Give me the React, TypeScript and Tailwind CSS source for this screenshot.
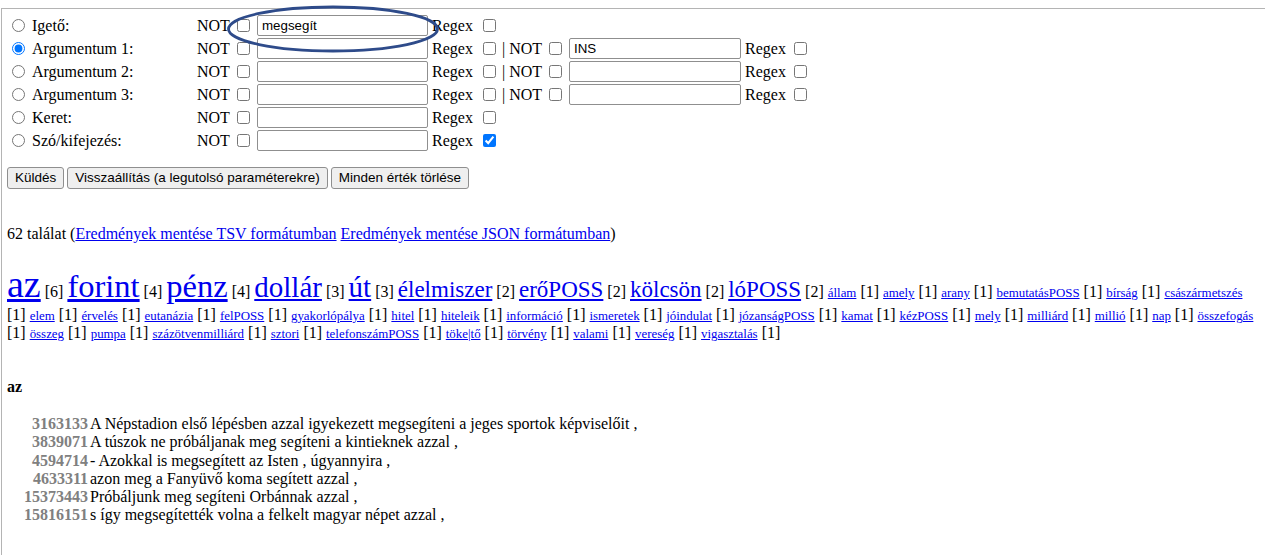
import React from "react";

const serif = { fontFamily: '"Liberation Serif", "Times New Roman", serif' };

type RowDef = { label: string; checked?: boolean; value?: string; second?: boolean; secondValue?: string; regexChecked?: boolean };

const rows: RowDef[] = [
  { label: "Igető:", value: "megsegít" },
  { label: "Argumentum 1:", checked: true, second: true, secondValue: "INS" },
  { label: "Argumentum 2:", second: true },
  { label: "Argumentum 3:", second: true },
  { label: "Keret:" },
  { label: "Szó/kifejezés:", regexChecked: true },
];

const cloud: [string, number][] = [
  ["az", 6], ["forint", 4], ["pénz", 4], ["dollár", 3], ["út", 3],
  ["élelmiszer", 2], ["erőPOSS", 2], ["kölcsön", 2], ["lóPOSS", 2],
  ["állam", 1], ["amely", 1], ["arany", 1], ["bemutatásPOSS", 1], ["bírság", 1], ["császármetszés", 1],
  ["elem", 1], ["érvelés", 1], ["eutanázia", 1], ["felPOSS", 1], ["gyakorlópálya", 1], ["hitel", 1],
  ["hiteleik", 1], ["információ", 1], ["ismeretek", 1], ["jóindulat", 1], ["józanságPOSS", 1], ["kamat", 1],
  ["kézPOSS", 1], ["mely", 1], ["milliárd", 1], ["millió", 1], ["nap", 1], ["összefogás", 1],
  ["összeg", 1], ["pumpa", 1], ["százötvenmilliárd", 1], ["sztori", 1], ["telefonszámPOSS", 1], ["töke|tő", 1],
  ["törvény", 1], ["valami", 1], ["vereség", 1], ["vigasztalás", 1],
];

const sizeClass: Record<number, string> = {
  6: "text-[38px]",
  4: "text-[32.5px]",
  3: "text-[29px]",
  2: "text-[23px]",
  1: "text-[12.9px]",
};

const results: [string, string][] = [
  ["3163133", "A Népstadion első lépésben azzal igyekezett megsegíteni a jeges sportok képviselőit ,"],
  ["3839071", "A túszok ne próbáljanak meg segíteni a kintieknek azzal ,"],
  ["4594714", "- Azokkal is megsegített az Isten , úgyannyira ,"],
  ["4633311", "azon meg a Fanyüvő koma segített azzal ,"],
  ["15373443", "Próbáljunk meg segíteni Orbánnak azzal ,"],
  ["15816151", "s így megsegítették volna a felkelt magyar népet azzal ,"],
];

function TextInput({ value, w }: { value?: string; w: string }) {
  return (
    <input
      type="text"
      defaultValue={value}
      className={`${w} h-[21px] border border-[#8f8f8f] rounded-[2px] bg-white px-[4px] text-[13.33px] text-black outline-none`}
      style={{ fontFamily: '"Liberation Sans", Arial, sans-serif' }}
    />
  );
}

function Box({ checked }: { checked?: boolean }) {
  return <input type="checkbox" defaultChecked={checked} className="w-[13px] h-[13px] shrink-0" />;
}

export default function App() {
  return (
    <div className="w-[1265px] h-[555px] bg-white overflow-hidden text-black leading-[normal]" style={serif}>
      <div className="relative mt-[8px] ml-[1px] border-t border-l border-[#b4b4b4] h-[547px] pl-[5px] pr-[6px] pt-[5px] text-[16px]">
        {/* form */}
        <div className="flex flex-col">
          {rows.map((r, i) => (
            <div key={i} className="flex items-center h-[23px]">
              <div className="w-[190px] flex items-center pl-[5px] shrink-0">
                <input type="radio" name="kind" defaultChecked={r.checked} className="w-[13px] h-[13px] shrink-0" />
                <span className="ml-[7px] leading-none">{r.label}</span>
              </div>
              <span className="w-[40px] shrink-0 leading-none">NOT</span>
              <Box />
              <div className="ml-[7px] flex">
                <TextInput value={r.value} w="w-[171px]" />
              </div>
              <span className="ml-[4px] w-[51px] shrink-0 leading-none">Regex</span>
              <Box checked={r.regexChecked} />
              {r.second && (
                <>
                  <span className="ml-[6px] w-[47px] shrink-0 leading-none">| NOT</span>
                  <Box />
                  <div className="ml-[7px] flex">
                    <TextInput value={r.secondValue} w="w-[172px]" />
                  </div>
                  <span className="ml-[4px] w-[49px] shrink-0 leading-none">Regex</span>
                  <Box />
                </>
              )}
            </div>
          ))}
        </div>

        {/* annotation ellipse */}
        <svg className="absolute left-[223px] top-[-5px] pointer-events-none" width="216" height="50" viewBox="0 0 216 50">
          <ellipse cx="108" cy="25" rx="104.5" ry="22" fill="none" stroke="#2e4b8a" strokeWidth="2.8" />
        </svg>

        {/* buttons */}
        <div className="flex gap-[3px] mt-[15px]" style={{ fontFamily: '"Liberation Sans", Arial, sans-serif' }}>
          {["Küldés", "Visszaállítás (a legutolsó paraméterekre)", "Minden érték törlése"].map((b) => (
            <button
              key={b}
              className="h-[22px] px-[7px] text-[13.5px] bg-[#efefef] border border-[#8f8f8f] rounded-[3px] text-black leading-none"
            >
              {b}
            </button>
          ))}
        </div>

        {/* results count */}
        <div className="mt-[36px] leading-[18px]">
          62 találat (
          <a className="text-[#0000ee] underline">Eredmények mentése TSV formátumban</a>{" "}
          <a className="text-[#0000ee] underline">Eredmények mentése JSON formátumban</a>)
        </div>

        {/* word cloud */}
        <div className="mt-[19px]">
          {cloud.map(([w, c], i) => (
            <React.Fragment key={i}>
              <a className={`${sizeClass[c]} text-[#0000ee] underline`}>{w}</a> [{c}]{" "}
            </React.Fragment>
          ))}
        </div>

        {/* heading */}
        <div className="mt-[36px] font-bold leading-[18px] text-[16px]">az</div>

        {/* results */}
        <div className="mt-[19px] flex flex-col">
          {results.map(([n, t]) => (
            <div key={n} className="flex leading-[18.3px]">
              <span className="w-[81px] text-right font-bold text-[#808080] shrink-0">{n}</span>
              <span className="ml-[2px]">{t}</span>
            </div>
          ))}
        </div>
      </div>
    </div>
  );
}
